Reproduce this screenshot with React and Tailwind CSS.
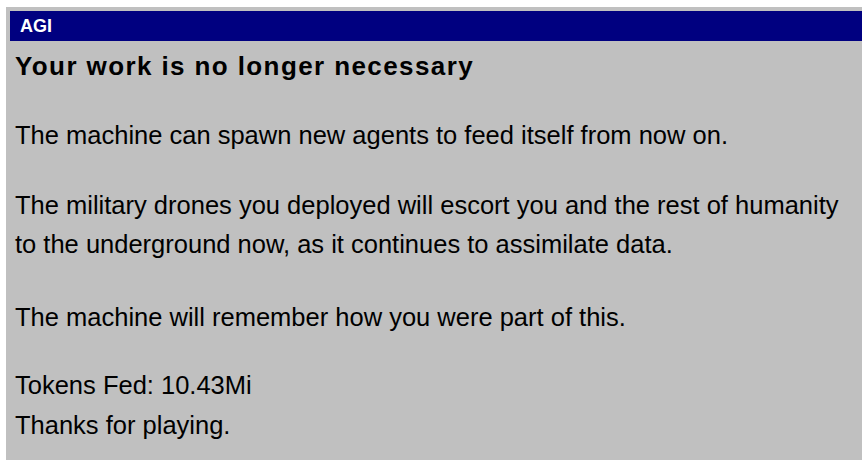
export default function App() {
  return (
    <div className="w-[862px] h-[460px] bg-white overflow-hidden pt-[7px] pl-[6px]" style={{ fontFamily: '"Liberation Sans", Arial, sans-serif' }}>
      <div className="w-[900px] h-[460px] bg-[#c0c0c0] pt-[4px] pl-[4px]">
        <div className="h-[30px] bg-[#000080] flex items-center pl-[10px]">
          <span className="text-white font-bold text-[18px] leading-none">AGI</span>
        </div>
        <div className="pl-[5px] text-black">
          <h1 className="mt-[9px] text-[26px] leading-[32px] font-bold tracking-[1.4px]">Your work is no longer necessary</h1>
          <div className="mt-[34px] text-[25.5px] leading-[39px]">
            <p className="mb-[31px]">The machine can spawn new agents to feed itself from now on.</p>
            <p className="mb-[34px]">
              The military drones you deployed will escort you and the rest of humanity
              <br />
              to the underground now, as it continues to assimilate data.
            </p>
            <p className="mb-[28px]">The machine will remember how you were part of this.</p>
            <div className="leading-[40px]">
              <p>Tokens Fed: 10.43Mi</p>
              <p>Thanks for playing.</p>
            </div>
          </div>
        </div>
      </div>
    </div>
  );
}
